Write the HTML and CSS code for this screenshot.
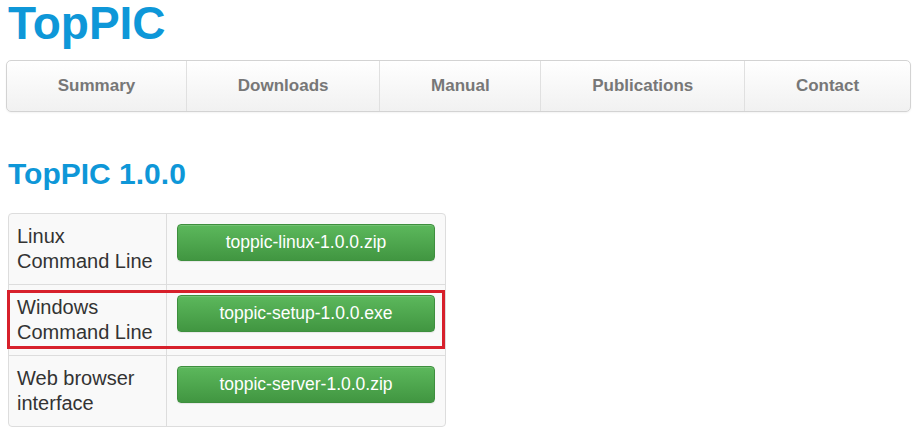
FILE: index.html
```html
<!DOCTYPE html>
<html lang="en">
<head>
<meta charset="utf-8">
<title>TopPIC</title>
<link rel="stylesheet" href="styles.css">
</head>
<body>
<div class="page">
  <h1 class="title">TopPIC</h1>
  <nav class="nav">
    <a class="nav-item" href="#">Summary</a>
    <a class="nav-item" href="#">Downloads</a>
    <a class="nav-item" href="#">Manual</a>
    <a class="nav-item" href="#">Publications</a>
    <a class="nav-item" href="#">Contact</a>
  </nav>
  <h2 class="section-title">TopPIC 1.0.0</h2>
  <div class="table-wrap">
    <table class="dl-table">
      <tr>
        <td class="label">Linux<br>Command Line</td>
        <td class="action"><a class="btn" href="#">toppic-linux-1.0.0.zip</a></td>
      </tr>
      <tr>
        <td class="label">Windows<br>Command Line</td>
        <td class="action"><a class="btn" href="#">toppic-setup-1.0.0.exe</a></td>
      </tr>
      <tr>
        <td class="label">Web browser<br>interface</td>
        <td class="action"><a class="btn" href="#">toppic-server-1.0.0.zip</a></td>
      </tr>
    </table>
    <div class="highlight"></div>
  </div>
</div>
</body>
</html>
```
FILE: styles.css
```css
html, body {
  margin: 0;
  padding: 0;
  background: #fff;
}
body {
  font-family: "Liberation Sans", Arial, sans-serif;
  color: #333;
}
.page {
  padding: 0 3px 0 8px;
}
.title {
  margin: 0;
  font-size: 46px;
  line-height: 46px;
  font-weight: bold;
  color: #0e97d8;
}
.nav {
  display: flex;
  margin: 14px 0 0 -2px;
  height: 50px;
  border: 1px solid #d3d3d3;
  border-radius: 5px;
  background: linear-gradient(to bottom, #ffffff 0%, #f1f1f1 100%);
  box-shadow: 0 1px 2px rgba(0,0,0,0.05);
}
.nav-item {
  flex: 1 1 auto;
  display: flex;
  align-items: center;
  justify-content: center;
  font-size: 17px;
  font-weight: bold;
  color: #777;
  text-decoration: none;
  border-left: 1px solid #e0e0e0;
}
.nav-item:first-child {
  border-left: none;
}
.section-title {
  margin: 44px 0 0 0;
  font-size: 30px;
  line-height: 36px;
  font-weight: bold;
  color: #0e97d8;
}
.table-wrap {
  position: relative;
  margin-top: 21px;
  width: 438px;
}
.dl-table {
  border-collapse: separate;
  border-spacing: 0;
  width: 438px;
  background: #f9f9f9;
  border: 1px solid #ddd;
  border-radius: 4px;
}
.dl-table td {
  border-top: 1px solid #ddd;
  padding: 10px 8px;
  height: 50px;
  vertical-align: top;
  font-size: 20px;
  line-height: 25px;
}
.dl-table tr:first-child td {
  border-top: none;
}
.dl-table td.label {
  width: 141px;
  border-right: 1px solid #ddd;
}
.dl-table td.action {
  padding: 10px 10px;
}
.btn {
  display: block;
  height: 35px;
  line-height: 35px;
  text-align: center;
  color: #fff;
  font-size: 17.5px;
  text-decoration: none;
  border: 1px solid #3e8f3e;
  border-radius: 4px;
  background: linear-gradient(to bottom, #5cb85c 0%, #419641 100%);
  box-shadow: inset 0 1px 0 rgba(255,255,255,0.15), 0 1px 1px rgba(0,0,0,0.075);
}
.highlight {
  position: absolute;
  left: -1px;
  top: 77px;
  width: 432px;
  height: 53px;
  border: 3px solid #d7202b;
}
```
